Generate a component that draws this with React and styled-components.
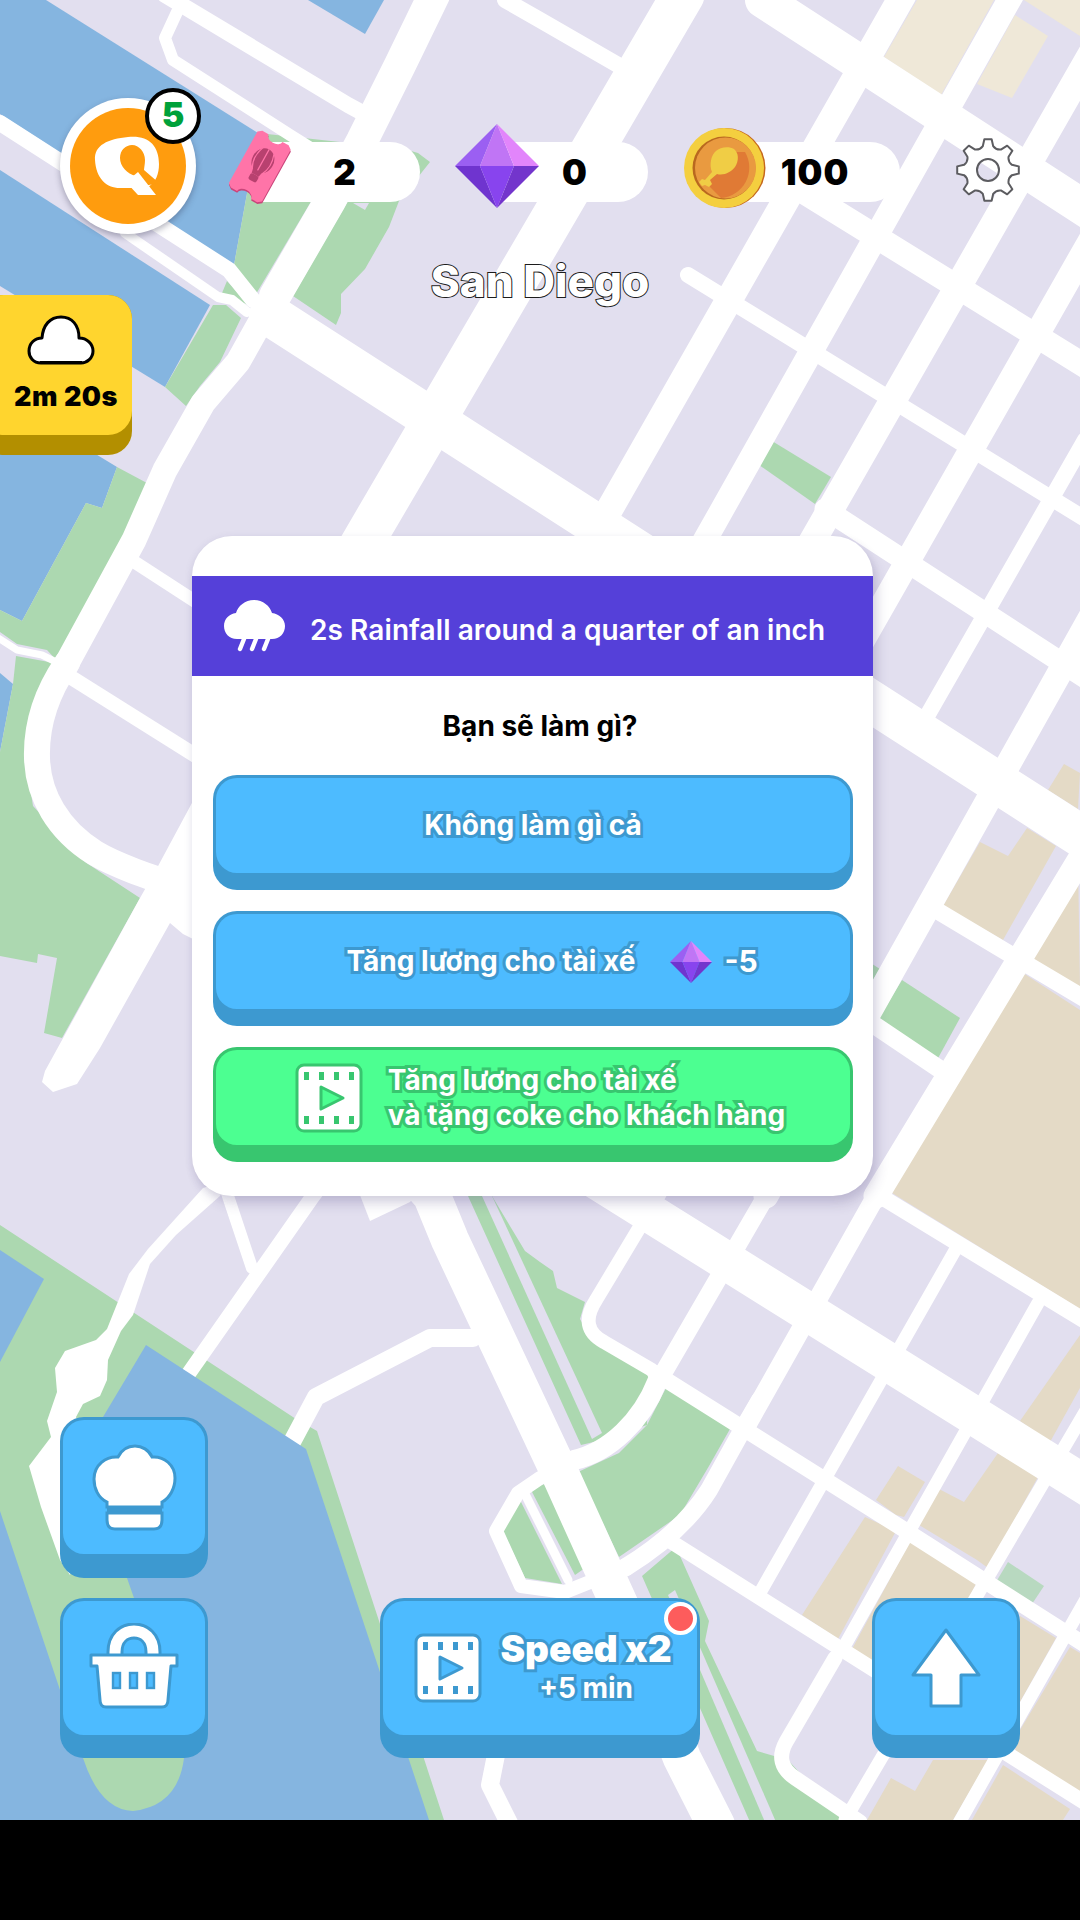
import React from "react";
import styled, { createGlobalStyle } from "styled-components";

const C = {
  lav: "#e2dfef", water: "#85b5e0", park: "#acd8b0", beige: "#e4dac6", pale: "#efe8d8",
  blue: "#4dbbff", blueDark: "#3d99d0", green: "#4cff91", greenDark: "#38c66f",
  yellow: "#ffd52e", yellowDark: "#b38f00",
};

const Global = createGlobalStyle`
  html, body { margin: 0; background: #000; }
  body { font-family: "Inter", "Noto Sans", sans-serif; }
  #root { width: 1080px; height: 1920px; background: #000; overflow: hidden; }
`;

const Screen = styled.div`
  position: relative;
  width: 1080px;
  height: 1820px;
  overflow: hidden;
  background: ${C.lav};
`;
const MapLayer = styled.svg`
  position: absolute;
  inset: 0;
  display: block;
`;
const Hud = styled.div`
  position: relative;
  display: flex;
  flex-direction: column;
  height: 100%;
  padding-top: 98px;
  box-sizing: border-box;
`;

/* top bar */
const TopBar = styled.header`
  display: flex;
  align-items: center;
  padding-left: 60px;
  height: 136px;
`;
const Avatar = styled.div`
  position: relative;
  flex: none;
  width: 136px;
  height: 136px;
  border-radius: 50%;
  background: #fff;
  box-shadow: 0 3px 6px rgba(40, 40, 70, 0.35);
  display: flex;
  align-items: center;
  justify-content: center;
  margin-right: 30px;
`;
const AvatarDisc = styled.div`
  width: 116px;
  height: 116px;
  border-radius: 50%;
  background: #ff9c0e;
  display: flex;
  align-items: center;
  justify-content: center;
`;
const Badge = styled.div`
  position: absolute;
  top: -10px;
  right: -5px;
  width: 56px;
  height: 56px;
  box-sizing: border-box;
  border: 4px solid #000;
  border-radius: 50%;
  background: #fff;
  color: #00a13a;
  font-weight: 900;
  font-size: 34px;
  line-height: 46px;
  text-align: center;
`;
const Stat = styled.div`
  display: flex;
  align-items: center;
  flex: none;
  margin-right: ${(p) => p.$gap}px;
`;
const StatIcon = styled.div`
  position: relative;
  z-index: 1;
  display: flex;
  flex: none;
  margin-top: ${(p) => p.$mt || 0}px;
`;
const Pill = styled.div`
  margin-left: ${(p) => -p.$overlap}px;
  margin-top: 12px;
  width: ${(p) => p.$width}px;
  height: 60px;
  box-sizing: border-box;
  padding: 0 ${(p) => p.$right}px 0 ${(p) => p.$overlap}px;
  border-radius: 0 30px 30px 0;
  background: #fff;
  color: #000;
  font-weight: 900;
  font-size: 35px;
  line-height: 60px;
  letter-spacing: 1px;
  text-align: center;
`;
const GearBox = styled.div`
  display: flex;
  flex: none;
  margin-left: 20px;
  margin-top: 8px;
`;

/* title + chip */
const Upper = styled.section`
  display: grid;
  height: 221px;
`;
const City = styled.h1`
  grid-area: 1 / 1;
  justify-self: center;
  align-self: start;
  margin: 22px 0 0;
  font-size: 44px;
  line-height: 50px;
  font-weight: 800;
  color: #fff;
  -webkit-text-stroke: 2px #1c1c1c;
  paint-order: stroke fill;
`;
const Chip = styled.div`
  grid-area: 1 / 1;
  justify-self: start;
  align-self: start;
  margin: 61px 0 0 -20px;
  width: 152px;
  height: 160px;
  box-sizing: border-box;
  padding-bottom: 20px;
  border-radius: 24px;
  background: ${C.yellowDark};
`;
const ChipFace = styled.div`
  height: 100%;
  box-sizing: border-box;
  padding: 20px 0 0 20px;
  border-radius: 24px;
  background: ${C.yellow};
  display: flex;
  flex-direction: column;
  align-items: center;
`;
const ChipCloud = styled.svg`
  display: block;
  margin-right: 10px;
`;
const ChipTime = styled.div`
  margin-top: 15px;
  color: #000;
  font-weight: 900;
  font-size: 27px;
  line-height: 34px;
  letter-spacing: 0.5px;
  white-space: nowrap;
`;

/* modal */
const Modal = styled.section`
  margin: 81px 0 0 192px;
  width: 681px;
  height: 660px;
  box-sizing: border-box;
  border-radius: 40px;
  background: #fff;
  padding-top: 40px;
  box-shadow: 5px 9px 12px rgba(60, 50, 110, 0.16), 0 2px 8px rgba(60, 50, 110, 0.1);
`;
const Band = styled.div`
  height: 100px;
  background: #5540d9;
  display: flex;
  align-items: center;
  gap: 25px;
  padding-left: 32px;
  color: #fff;
  font-weight: 600;
  font-size: 28px;
`;
const BandText = styled.span`
  padding-top: 8px;
  letter-spacing: 0.08px;
`;
const Question = styled.div`
  height: 99px;
  display: flex;
  align-items: center;
  justify-content: center;
  padding-left: 15px;
  color: #000;
  font-weight: 700;
  font-size: 28px;
`;
const Choices = styled.div`
  display: flex;
  flex-direction: column;
  gap: 21px;
  padding: 0 20px 0 21px;
`;
const Key = styled.button`
  position: relative;
  display: block;
  flex: none;
  width: ${(p) => (p.$w ? `${p.$w}px` : "100%")};
  height: ${(p) => p.$h}px;
  box-sizing: border-box;
  border: 0;
  margin: 0;
  padding: 3px 3px ${(p) => p.$depth}px;
  border-radius: 24px;
  background: ${(p) => (p.$green ? C.greenDark : C.blueDark)};
  font-family: inherit;
`;
const Face = styled.div`
  height: 100%;
  box-sizing: border-box;
  border-radius: 21px;
  background: ${(p) => (p.$green ? C.green : C.blue)};
  display: flex;
  align-items: center;
  justify-content: center;
  padding-left: ${(p) => p.$pl || 0}px;
  padding-bottom: ${(p) => p.$pb || 0}px;
  gap: ${(p) => p.$gap || 0}px;
`;
const Outlined = styled.span`
  display: block;
  color: #fff;
  font-weight: ${(p) => p.$weight || 700};
  font-size: ${(p) => p.$size || 28}px;
  line-height: ${(p) => p.$lh || 35}px;
  text-align: left;
  white-space: nowrap;
  -webkit-text-stroke: ${(p) => p.$stroke || 6}px ${(p) => (p.$green ? C.greenDark : C.blueDark)};
  paint-order: stroke fill;
`;
const GemSlot = styled.span`
  display: flex;
  margin: 0 12px 0 35px;
`;
const SpeedText = styled.div`
  display: flex;
  flex-direction: column;
  align-items: center;
  margin-top: -4px;
`;
const Dot = styled.span`
  position: absolute;
  top: 4px;
  right: 3px;
  width: 33px;
  height: 33px;
  box-sizing: border-box;
  border: 4px solid #fff;
  border-radius: 50%;
  background: #fd5c5c;
`;

/* bottom */
const Bottom = styled.footer`
  display: flex;
  align-items: flex-end;
  justify-content: space-between;
  padding: 0 60px;
  margin-top: 221px;
`;
const Stack = styled.div`
  display: flex;
  flex-direction: column;
  gap: 20px;
`;

/* ---------- drawings ---------- */
const Gem = ({ size }) => (
  <svg width={size} height={size} viewBox="0 0 84 84">
    <path fill="#9b5ff2" d="M42 0 0 42h25z" />
    <path fill="#c075f5" d="M42 0 25 42h34z" />
    <path fill="#e285fb" d="M42 0 59 42h25z" />
    <path fill="#6f34cf" d="M0 42h25l17 42z" />
    <path fill="#8844ee" d="M25 42h34L42 84z" />
    <path fill="#7335cc" d="M59 42h25L42 84z" />
  </svg>
);

const ticketShape = "M19 8h7a8 5.5 0 0 0 16 0h7l4 3v59l-4 3h-7a8 5.5 0 0 0-16 0h-7l-4-3V11z";
const Ticket = () => (
  <svg width="68" height="81" viewBox="0 0 68 81">
    <g transform="rotate(29 34 40)">
      <path fill="#c9457a" transform="translate(1 1.5)" d={ticketShape} />
      <path fill="#ff74a8" d={ticketShape} />
      <ellipse cx="34" cy="34" rx="11" ry="13" fill="#b8416f" />
      <path d="M34 21v26M27.5 23c-3 8-3 16 1 23M40.5 23c3 8 3 16-1 23" stroke="#ff74a8" strokeWidth="1.2" fill="none" />
      <path d="M29 45l1 5h8l1-5z" fill="#b8416f" />
      <rect x="29.5" y="50" width="9" height="7" rx="2" fill="#b8416f" />
    </g>
  </svg>
);

const Coin = () => (
  <svg width="84" height="80" viewBox="0 0 84 80">
    <circle cx="42.5" cy="40" r="40" fill="#c5671d" />
    <circle cx="41" cy="40" r="40" fill="#f4cf3f" />
    <circle cx="41" cy="40" r="31.5" fill="#b9681f" />
    <circle cx="42.5" cy="40" r="30.5" fill="#e99a40" />
    <path fill="#e07a35" d="M62 24a30.5 30.5 0 0 1-24 46L22 54l30-30z" />
    <path fill="#f0cd45" d="M33 23c4-4 13-5 18-2 5 4 5 12 1 18-4 5-11 9-18 7l-7 6 2 4-3 3-4-2-3 1-3-4 3-3 3 1 7-8c-3-7-1-17 4-21z" />
  </svg>
);

const gearPath = (() => {
  const teeth = 8, R = 31, r = 24.5, cx = 33, cy = 33;
  const pt = (rad, a) => `${(cx + rad * Math.cos(a)).toFixed(2)} ${(cy + rad * Math.sin(a)).toFixed(2)}`;
  let d = "";
  for (let i = 0; i < teeth; i++) {
    const a = (i * 2 * Math.PI) / teeth - Math.PI / 2;
    const s = (2 * Math.PI) / teeth;
    d += `${i === 0 ? "M" : "L"}${pt(r, a - s * 0.27)} L${pt(R, a - s * 0.15)} L${pt(R, a + s * 0.15)} L${pt(r, a + s * 0.27)} `;
    d += `Q${pt(r - 3, a + s * 0.5)} ${pt(r, a + s * 0.73)} `;
  }
  return d + "Z M44 33a11 11 0 1 0-22 0a11 11 0 1 0 22 0Z";
})();

const Gear = () => (
  <svg width="66" height="66" viewBox="0 0 66 66">
    <path d={gearPath} fill="#fff" fillRule="evenodd" stroke="#5c5c60" strokeWidth="2" strokeLinejoin="round" />
  </svg>
);

const QLogo = () => (
  <svg width="116" height="116" viewBox="10 10 116 116">
    <path fill="#fff" d="M35 62C34 47 48 41 68 39c20-2 31 8 31 27 0 10-3 18-11 23l-8 1H60C46 90 36 80 35 62z" />
    <path fill="#ff9c0e" d="M60 60c0-8 6-13 12-13 7 0 13 7 13 15 0 4-1 8-1 10l15 13-15 3-8-10c-9-2-16-10-16-18z" />
    <path fill="#fff" d="M66 84l12 13h18L78 74z" />
  </svg>
);

const CloudIcon = () => (
  <ChipCloud width="68" height="50" viewBox="0 0 68 50">
    <path fill="#fff" stroke="#000" strokeWidth="3" strokeLinejoin="round" d="M14 48C6 48 2 42 2 36c0-8 6-13 13-13C16 10 23 2 34 2s18 8 18 21c8 0 14 6 14 13 0 7-6 12-12 12z" />
    <path stroke="#000" strokeWidth="3" d="M13 47.5h42" />
  </ChipCloud>
);

const RainIcon = () => (
  <svg width="61" height="52" viewBox="0 0 61 52">
    <path fill="#fff" d="M13 39C5 39 0 33 0 26c0-7 5-12 12-13C14 6 21 0 30 0s16 6 18 13c7 1 13 6 13 13 0 7-5 13-13 13z" />
    <path stroke="#fff" strokeWidth="4.4" strokeLinecap="round" d="M20 39l-4 10M32 39l-4 10M44 39l-4 10" />
  </svg>
);

const Film = ({ stroke, face }) => (
  <svg width="68" height="70" viewBox="0 0 68 70">
    <rect x="2" y="2" width="64" height="66" rx="7" fill="#fff" stroke={stroke} strokeWidth="3" />
    {[9, 24, 39, 54].map((x) => (
      <React.Fragment key={x}>
        <rect x={x} y="9" width="5" height="8" fill={stroke} />
        <rect x={x} y="53" width="5" height="8" fill={stroke} />
      </React.Fragment>
    ))}
    <path d="M26 24l22 11-22 11z" fill={face} stroke={stroke} strokeWidth="3" strokeLinejoin="round" />
  </svg>
);

const ChefHat = () => (
  <svg width="85" height="87" viewBox="0 0 85 87">
    <rect x="15" y="56" width="55" height="15" fill={C.blueDark} />
    <path fill="#fff" stroke={C.blueDark} strokeWidth="3" d="M15 58C6 54 2 44 2 35 2 21 14 12 26 13c4-8 11-11 17-11 7 0 14 4 17 11 12-1 23 8 23 21 0 10-5 20-13 24v5H15z" />
    <path fill="#fff" stroke={C.blueDark} strokeWidth="3" d="M15 69h55v7c0 6-3 9-8 9H23c-5 0-8-3-8-9z" />
  </svg>
);

const Basket = () => (
  <svg width="90" height="86" viewBox="0 0 90 86">
    <path fill="none" stroke={C.blueDark} strokeWidth="17" d="M26 38V29C26 15 35 8 45 8s19 7 19 21v9" />
    <path fill="none" stroke="#fff" strokeWidth="11" d="M26 38V29C26 15 35 8 45 8s19 7 19 21v9" />
    <path fill="#fff" stroke={C.blueDark} strokeWidth="3" strokeLinejoin="round" d="M2 32h86v11h-6l-3 34c0 4-2 7-6 7H17c-4 0-6-3-6-7L8 43H2z" />
    {[24, 41, 58].map((x) => (
      <rect key={x} x={x} y="50" width="7" height="15" fill={C.blue} stroke={C.blueDark} strokeWidth="2.4" />
    ))}
  </svg>
);

const UpArrow = () => (
  <svg width="70" height="80" viewBox="0 0 70 80">
    <path fill="#fff" stroke={C.blueDark} strokeWidth="3" strokeLinejoin="round" d="M35 2l33 45H50v31H20V47H2z" />
  </svg>
);

/* map data: full-page coordinates */
const water = [
  "0,0 46,0 258,133 234,265 0,114",
  "0,170 210,305 165,387 0,286",
  "0,396 117,467 102,508 86,503 22,621 0,610",
  "0,673 13,684 0,752",
  "308,0 384,0 365,34",
];
const park = [
  "258,133 340,142 312,200 256,294 234,265",
  "348,201 380,142 418,153 430,162 399,201 389,227 365,269 341,294 341,313 336,325 293,296",
  "227,281 250,306 222,293",
  "213,305 226,305 241,318 220,362 200,386 186,406 165,387",
  "117,467 160,490 60,664 47,650 17,644 0,632 0,610 22,621 86,503 102,508",
  "16,656 60,664 25,755 33,806 85,862 140,898 62,1038 44,1033 57,958 38,954 37,963 0,956 0,752 13,684",
  "772,441 831,477 815,504 759,465",
  "902,980 960,1018 937,1060 877,1021",
  "850,950 880,969 860,1000",
  "468,1196 492,1196 525,1251 540,1262 553,1271 557,1288 585,1302 580,1319 592,1341 648,1375 647,1425 602,1440 581,1445",
  "578,1472 619,1453 647,1425 666,1388 730,1429 709,1466 680,1515 619,1557",
  "642,1576 676,1547 709,1621 705,1641 757,1751 788,1760 845,1822 750,1822",
  "530,1488 545,1484 585,1568 575,1575",
  "520,1500 503,1531 525,1578 562,1584",
];
const lavStrips = [
  "482,1196 492,1196 602,1433 592,1439",
  "668,1595 675,1590 776,1822 765,1822",
  "353,203 365,210 369,203",
];
const beige = [
  "1017,969 1080,1010 1080,1309 892,1193",
  "943,906 980,842 1008,856 1027,828 1056,846 1003,940",
  "1025,954 1078,860 1080,990",
  "1048,790 1064,764 1080,773 1078,809",
  "1080,1335 1020,1421 1050,1442 1080,1388",
  "998,1453 1038,1477 988,1568 977,1560 919,1525 939,1489 964,1502",
  "898,1466 925,1482 904,1517 896,1515 876,1500",
  "865,1517 896,1531 838,1639 802,1615",
  "911,1540 970,1574 977,1582 969,1598 960,1620 880,1680 852,1649",
  "1020,1616 1056,1638 1020,1702",
  "1070,1647 1080,1653 1080,1792 1015,1751 1020,1730",
  "933,1760 915,1791 891,1778 867,1820 953,1820 988,1760",
  "1003,1765 1070,1809 1063,1820 972,1820",
];
const pale = [
  "917,0 994,0 941,95 884,57",
  "1015,15 1048,36 1012,98 977,84",
  "1024,0 1080,0 1080,36",
];
const fills = [
  "193,801 157,868 140,898 45,1071 42,1082 53,1092 77,1084 100,1048 170,923 183,934 193,939 300,940 300,800",
  "203,1188 148,1249 129,1274 107,1329 96,1340 65,1351 55,1368 57,1392 47,1421 51,1437 29,1466 41,1507 60,1560 70,1575 100,1500 76,1417 83,1404 100,1396 107,1380 108,1360 121,1331 133,1315 150,1264 176,1235 220,1196 230,1180",
  "358,1190 370,1221 410,1202 420,1190",
];
const roads = [
  ["165,-5 348,105 372,118", 16],
  ["177,12 165,38 173,60 290,135 330,160", 12],
  ["0,123 229,270 253,300", 16],
  ["125,233 218,297 232,300 247,312", 10],
  ["505,0 540,20 618,65", 16],
  ["434,-5 400,65 362,141 330,201 275,296", 32],
  ["275,296 238,362 203,403 165,470 134,540 67,663", 25],
  ["-5,636 17,650 42,655 60,664", 7],
  ["136,563 193,600 240,630", 13],
  ["72,678 193,754 240,783", 15],
  ["270,315 1090,842", 42],
  ["763,0 1090,212", 36],
  ["786,181 1090,369", 24],
  ["688,275 1090,522", 16],
  ["825,509 1090,681", 21],
  ["931,907 1090,1002", 17],
  ["800,975 938,1068", 18],
  ["683,-5 364,540 250,735", 43],
  ["903,-5 592,540 500,700", 27],
  ["1012,-5 705,540 650,640", 24],
  ["1125,-5 813,540 760,630", 27],
  ["1125,180 800,750", 25],
  ["1085,440 915,737", 16],
  ["1092,615 766,1196", 25],
  ["766,1196 665,1370", 18],
  ["1134,770 876,1196", 25],
  ["876,1196 748,1423", 19],
  ["957,1247 761,1591", 13],
  ["1038,1303 845,1645", 13],
  ["1095,1395 845,1820", 13],
  ["1090,1592 955,1830", 13],
  ["880,1196 1090,1324", 16],
  ["560,1157 1090,1488", 39],
  ["655,1373 900,1527 1090,1648", 16],
  ["670,1541 1090,1806", 15],
  ["600,1580 626,1567", 18],
  ["400,1160 432,1196 450,1240 490,1325 562,1478 600,1562 640,1650 682,1758 716,1825", 38],
  ["473,1338 430,1338 316,1397 285,1455", 18],
  ["340,1160 313,1196 175,1393", 15],
  ["215,1160 228,1196 252,1268", 12],
  ["497,1750 490,1785 510,1825", 18],
  ["540,1478 518,1493 496,1531 521,1586 565,1592 590,1582", 14],
  ["523,1490 568,1580", 9],
];
const curves = [
  ["M67 663C45 695 36 725 37 758C38 795 58 830 95 853C120 868 160 880 195 892", 26],
  ["M835 1658L786 1742Q774 1764 795 1778L860 1822", 15],
  ["M680 1160L596 1300Q578 1328 604 1342L652 1370", 14],
  ["M574 1460C610 1452 642 1420 657 1382", 20],
  ["M626 1567C660 1546 690 1520 709 1490L739 1436L760 1400", 18],
];

const CityMap = () => (
  <MapLayer width="1080" height="1820" viewBox="0 0 1080 1820">
    {water.map((p) => <polygon key={p} points={p} fill={C.water} />)}
    <polygon fill={C.park} points="0,1225 296,1419 317,1431 444,1820 0,1820" />
    <polygon points="0,1250 44,1279 0,1362" fill={C.water} />
    {park.map((p) => <polygon key={p} points={p} fill={C.park} />)}
    {lavStrips.map((p) => <polygon key={p} points={p} fill={C.lav} />)}
    {beige.map((p) => <polygon key={p} points={p} fill={C.beige} />)}
    {pale.map((p) => <polygon key={p} points={p} fill={C.pale} />)}
    <polygon points="1008,1562 1044,1586 1032,1604 996,1582" fill="#b8d9c0" />
    {fills.map((p) => <polygon key={p} points={p} fill="#fff" />)}
    {roads.map(([p, w]) => (
      <polyline key={p} points={p} fill="none" stroke="#fff" strokeWidth={w} strokeLinejoin="round" strokeLinecap="round" />
    ))}
    {curves.map(([d, w]) => (
      <path key={d} d={d} fill="none" stroke="#fff" strokeWidth={w} strokeLinejoin="round" strokeLinecap="round" />
    ))}
    <path fill={C.water} d="M146 1345L306 1449L429 1820H0V1511L60 1690L83 1758Q100 1810 133 1811Q178 1806 184 1758L134 1598L127 1578L103 1417Z" />
  </MapLayer>
);

export default function App() {
  return (
    <>
      <Global />
      <Screen>
        <CityMap />
        <Hud>
          <TopBar>
            <Avatar>
              <AvatarDisc><QLogo /></AvatarDisc>
              <Badge>5</Badge>
            </Avatar>
            <Stat $gap={35}>
              <StatIcon><Ticket /></StatIcon>
              <Pill $overlap={40} $width={166} $right={24}>2</Pill>
            </Stat>
            <Stat $gap={35}>
              <StatIcon><Gem size={84} /></StatIcon>
              <Pill $overlap={39} $width={148} $right={37}>0</Pill>
            </Stat>
            <Stat $gap={35}>
              <StatIcon $mt={4}><Coin /></StatIcon>
              <Pill $overlap={37} $width={170} $right={37}>100</Pill>
            </Stat>
            <GearBox><Gear /></GearBox>
          </TopBar>
          <Upper>
            <City>San Diego</City>
            <Chip>
              <ChipFace>
                <CloudIcon />
                <ChipTime>2m 20s</ChipTime>
              </ChipFace>
            </Chip>
          </Upper>
          <Modal>
            <Band>
              <RainIcon />
              <BandText>2s Rainfall around a quarter of an inch</BandText>
            </Band>
            <Question>Bạn sẽ làm gì?</Question>
            <Choices>
              <Key $h={115} $depth={17}>
                <Face><Outlined>Không làm gì cả</Outlined></Face>
              </Key>
              <Key $h={115} $depth={17}>
                <Face $pl={38}>
                  <Outlined>Tăng lương cho tài xế</Outlined>
                  <GemSlot><Gem size={42} /></GemSlot>
                  <Outlined $size={30}>-5</Outlined>
                </Face>
              </Key>
              <Key $h={115} $depth={17} $green>
                <Face $green $pl={14} $gap={25}>
                  <Film stroke={C.greenDark} face={C.green} />
                  <div>
                    <Outlined $green>Tăng lương cho tài xế</Outlined>
                    <Outlined $green>và tặng coke cho khách hàng</Outlined>
                  </div>
                </Face>
              </Key>
            </Choices>
          </Modal>
          <Bottom>
            <Stack>
              <Key $w={148} $h={161} $depth={24}><Face><ChefHat /></Face></Key>
              <Key $w={148} $h={160} $depth={23}><Face $pb={4}><Basket /></Face></Key>
            </Stack>
            <Key $w={320} $h={160} $depth={23}>
              <Face $gap={18} $pl={6}>
                <Film stroke={C.blueDark} face={C.blue} />
                <SpeedText>
                  <Outlined $size={37} $lh={44} $weight={900}>Speed x2</Outlined>
                  <Outlined $size={28} $lh={34}>+5 min</Outlined>
                </SpeedText>
              </Face>
              <Dot />
            </Key>
            <Key $w={148} $h={160} $depth={23}><Face><UpArrow /></Face></Key>
          </Bottom>
        </Hud>
      </Screen>
    </>
  );
}
